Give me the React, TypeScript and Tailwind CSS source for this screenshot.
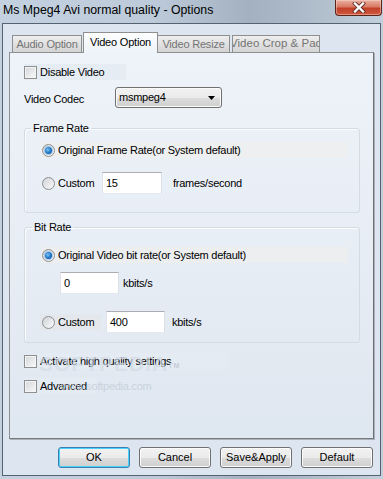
import React from 'react';

const font = "font-['Liberation_Sans',Arial,sans-serif]";

function CheckBox() {
  return (
    <span className="box-border block h-[13px] w-[13px] shrink-0 border border-[#8e8f8f] bg-gradient-to-br from-[#d3d7dc] to-[#f8f8f8] shadow-[inset_0_0_0_1px_#f4f4f4]" />
  );
}

function Radio({ checked = false }: { checked?: boolean }) {
  return (
    <span className="box-border flex h-[13px] w-[13px] shrink-0 items-center justify-center rounded-full border border-[#8e8f8f] bg-gradient-to-br from-[#d0d4d9] to-[#fafafa]">
      {checked && (
        <span className="block h-[7px] w-[7px] rounded-full bg-[radial-gradient(circle_at_40%_40%,#7fc8f5_0%,#1a6fc2_55%,#0d4f99_100%)] shadow-[0_0_0_1px_#9fc6e6]" />
      )}
    </span>
  );
}

function TextBox({ value, width }: { value: string; width: string }) {
  return (
    <div
      className={`box-border flex h-[22px] ${width} items-center border border-[#abadb3] border-b-[#e3e9ef] border-l-[#e2e3ea] border-r-[#dbdfe6] bg-white pl-[3px] text-[11px] text-black`}
    >
      {value}
    </div>
  );
}

function Button({ label, focused = false }: { label: string; focused?: boolean }) {
  return (
    <button
      className={
        focused
          ? 'box-border h-[21px] w-[72px] rounded-[3px] border border-[#3c7fb1] bg-[linear-gradient(#f2f2f2_0%,#ebebeb_50%,#dddddd_51%,#cfcfcf_100%)] text-[11px] text-black shadow-[inset_0_0_0_1px_#48d2fb]'
          : 'box-border h-[21px] w-[72px] rounded-[3px] border border-[#707070] bg-[linear-gradient(#f2f2f2_0%,#ebebeb_50%,#dddddd_51%,#cfcfcf_100%)] text-[11px] text-black shadow-[inset_0_0_0_1px_#fbfbfb]'
      }
    >
      {label}
    </button>
  );
}

export default function App() {
  return (
    <div
      className={`${font} flex h-[479px] w-[383px] flex-col overflow-hidden bg-[linear-gradient(90deg,#c3d1e0_0%,#bccad9_40%,#a3b1c0_65%,#b2bfcd_85%,#c2cfdc_100%)] px-[2px] pb-[3px] text-black`}
    >
      {/* title bar */}
      <div className="flex h-[23px] shrink-0 items-start justify-between">
        <span className="mt-[3px] pl-[1px] text-[12.3px] leading-[14px] text-black">
          Ms Mpeg4 Avi normal quality - Options
        </span>
        <div className="mr-[-1px] flex h-[16px] w-[47px] items-center justify-center rounded-b-[4px] border border-t-0 border-[#5a2519] bg-[linear-gradient(#eab0a2_0%,#d87a64_45%,#c2402a_55%,#cf5a3e_100%)] shadow-[inset_0_0_0_1px_rgba(255,220,210,0.45)]">
          <svg width="14" height="11" viewBox="0 0 14 11">
            <path d="M3 1.5 L11 9.5 M11 1.5 L3 9.5" stroke="#5b2a22" strokeWidth="4" strokeLinecap="square" />
            <path d="M3 1.5 L11 9.5 M11 1.5 L3 9.5" stroke="#ffffff" strokeWidth="2.4" strokeLinecap="square" />
          </svg>
        </div>
      </div>

      {/* client area */}
      <div className="flex flex-1 flex-col border border-[#55626f] bg-[#dde6f0]">
        {/* tabs */}
        <div className="mt-[8px] flex h-[20px] items-end pl-[9px] text-[11px] tracking-[-0.2px]">
          <div className="box-border flex h-[17px] w-[70px] items-center justify-center border border-b-0 border-[#8e8f8f] bg-gradient-to-b from-[#eeeeee] to-[#d4d4d4] text-[#747474]">
            Audio Option
          </div>
          <div className="relative z-10 -mb-px ml-[1px] box-border flex h-[21px] w-[75px] items-center justify-center border border-b-0 border-[#8e8f8f] bg-gradient-to-b from-[#fdfdfd] to-[#eef3f9] pb-[2px] text-black">
            Video Option
          </div>
          <div className="box-border flex h-[17px] w-[72px] items-center justify-center border border-b-0 border-l-0 border-[#8e8f8f] bg-gradient-to-b from-[#eeeeee] to-[#d4d4d4] text-[#747474]">
            Video Resize
          </div>
          <div className="ml-[2px] box-border flex h-[17px] w-[88px] items-center justify-center overflow-hidden whitespace-nowrap border border-b-0 border-[#8e8f8f] bg-gradient-to-b from-[#eeeeee] to-[#d4d4d4] text-[11.5px] tracking-[0px] text-[#747474]">
            Video Crop &amp; Pad
          </div>
        </div>

        {/* panel */}
        <div className="relative ml-[6px] box-border flex h-[387px] w-[365px] flex-col border border-[#8e8f8f] border-b-[#7a7a7a] border-r-[#6f6f6f] bg-[linear-gradient(#eef3f9_0%,#e7edf5_50%,#dfe7f0_100%)] pl-[14px] text-[11px] tracking-[-0.25px] shadow-[1px_1px_0_#a9b1ba]">
          <div className="mt-[11px] flex h-[16px] w-[102px] items-center gap-[3px] bg-[#e5ecf4]">
            <CheckBox />
            <span>Disable Video</span>
          </div>

          <div className="mt-[7px] flex items-center">
            <span className="mt-[4px] w-[91px]">Video Codec</span>
            <div className="box-border flex h-[21px] w-[107px] items-center justify-between rounded-[3px] border border-[#707070] bg-[linear-gradient(#f2f2f2_0%,#ebebeb_50%,#dddddd_51%,#cfcfcf_100%)] pl-[3px] pr-[6px] shadow-[inset_0_0_0_1px_#fafafa]">
              <span>msmpeg4</span>
              <svg width="7" height="4" viewBox="0 0 7 4">
                <path d="M0 0 H7 L3.5 4 Z" fill="#000" />
              </svg>
            </div>
          </div>

          {/* frame rate */}
          <fieldset className="mt-[14px] box-border h-[91px] w-[336px] rounded-[3px] border border-[#d3dbe3] shadow-[inset_1px_1px_0_#fafcfe]">
            <legend className="ml-[6px] px-[2px] leading-[13px]">Frame Rate</legend>
            <div className="ml-[16px] mt-[7px] flex h-[16px] w-[307px] items-center gap-[3px] bg-[#eeeff0] pl-[1px]">
              <Radio checked />
              <span>Original Frame Rate(or System default)</span>
            </div>
            <div className="ml-[17px] mt-[14px] flex h-[22px] items-center">
              <Radio />
              <span className="ml-[3px] w-[44px]">Custom</span>
              <TextBox value="15" width="w-[60px]" />
              <span className="ml-[11px]">frames/second</span>
            </div>
          </fieldset>

          {/* bit rate */}
          <fieldset className="mt-[8px] box-border h-[122px] w-[336px] rounded-[3px] border border-[#d3dbe3] shadow-[inset_1px_1px_0_#fafcfe]">
            <legend className="ml-[7px] px-[2px] leading-[13px]">Bit Rate</legend>
            <div className="ml-[16px] mt-[13px] flex h-[16px] w-[307px] items-center gap-[3px] bg-[#eceef0] pl-[1px]">
              <Radio checked />
              <span>Original Video bit rate(or System default)</span>
            </div>
            <div className="ml-[35px] mt-[9px] flex items-center">
              <TextBox value="0" width="w-[59px]" />
              <span className="ml-[4px]">kbits/s</span>
            </div>
            <div className="ml-[15px] mt-[17px] flex items-center">
              <div className="flex h-[16px] w-[61px] items-center gap-[3px] bg-[#e4e8ec] pl-[2px]">
                <Radio />
                <span>Custom</span>
              </div>
              <div className="ml-[5px]">
                <TextBox value="400" width="w-[59px]" />
              </div>
              <span className="ml-[7px]">kbits/s</span>
            </div>
          </fieldset>

          <div className="mt-[10px] flex h-[16px] w-[204px] items-center gap-[3px] bg-[#e4ebf3]">
            <CheckBox />
            <span>Activate high quality settings</span>
          </div>
          <div className="mt-[9px] flex h-[16px] w-[72px] items-center gap-[3px] bg-[#e4ebf3]">
            <CheckBox />
            <span>Advanced</span>
          </div>

          {/* softpedia watermark */}
          <div className="pointer-events-none absolute left-[29px] top-[295px] text-[21px] font-bold tracking-[1px] text-[#d2dbe5]/70">
            SOFTPEDIA<sup className="text-[7px] text-[#c4cdd7]">TM</sup>
          </div>
          <div className="pointer-events-none absolute left-[51px] top-[325px] text-[11px] text-[#c2ccd6]/80">
            www.softpedia.com
          </div>
        </div>

        {/* buttons */}
        <div className="mt-[8px] flex justify-end gap-[9px] pr-[7px]">
          <Button label="OK" focused />
          <Button label="Cancel" />
          <Button label="Save&Apply" />
          <Button label="Default" />
        </div>
      </div>
    </div>
  );
}
